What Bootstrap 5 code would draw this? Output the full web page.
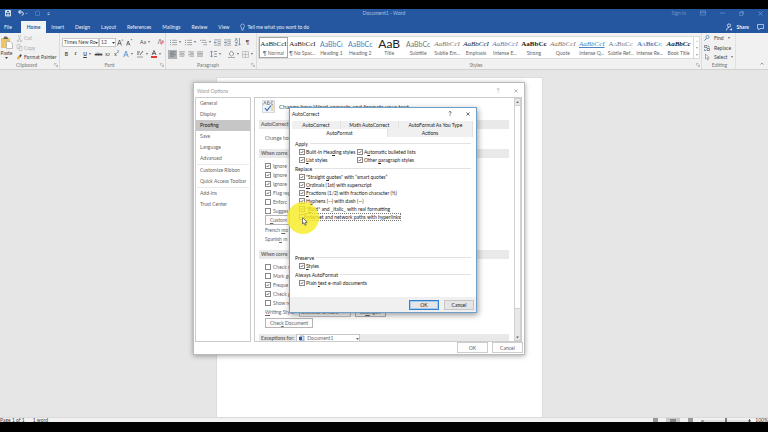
<!DOCTYPE html>
<html lang="en">
<head>
<meta charset="utf-8">
<meta name="viewport" content="width=device-width, initial-scale=1">
<title>Document1 - Word</title>
<link href="https://cdn.jsdelivr.net/npm/bootstrap@5.3.0/dist/css/bootstrap.min.css" rel="stylesheet">
<style>
:root{--word-blue:#2457a0}
body{font-family:Lato,"Open Sans",sans-serif;font-size:5px;line-height:8px;color:#333;background:#000;min-height:100vh;padding:9px 0 10px}
button,input,select{font:inherit;color:inherit}
svg{display:block;flex:none;overflow:visible}
a{color:inherit;text-decoration:none}
.plain{border:0;background:none;padding:0;display:flex;align-items:center;justify-content:center;line-height:8px}
.tight{gap:2px}
/* window frame */
.app-top{background:var(--word-blue);color:#e8eef8}
.titlebar{height:12px;position:relative;color:#a9c0e2}
.quick{gap:7px;padding-left:5px;color:#fff}
.wincontrols{gap:14px;padding-right:5px;color:#6f93c9}
.tabs{height:12px}
.tabs a{padding:0 6px 0 5px;line-height:12px}
.tabs .filetab{padding:0 9px 0 4px}
.tabs a.chosen{background:#f3f3f3;color:var(--word-blue);font-weight:700;padding:0 6px}
/* ribbon */
.ribbon{background:#f1f1f1;height:37px;border-bottom:1px solid #d2d2d2;color:#444}
.group{border-right:1px solid #dcdcdc;padding-top:3px;position:relative}
.caption{color:#777;line-height:8px;text-align:center;padding-right:6px}
.g-clip{width:60px;padding-top:1px}.g-font{width:106px}.g-para{width:91px}.g-edit{width:33px;padding:1px 0 0 2px}
.tools{height:25px}
.tools.tall{height:27px}
.toolrow{height:12px;padding-left:2px}
.launch{position:absolute;right:1px;bottom:2px}
.cell{width:9px;height:9px}
.wide{width:14px;height:9px;gap:2px}
.fade-ic{color:#aaa}
.combo{border:1px solid #c6c6c6;border-radius:0;background:#fff;height:9px;line-height:7px;padding:0 0 0 1px;appearance:none}
.face{width:37px}.size{width:17px}
.writing{width:52px}.target{width:64px;padding-left:10px}
.boxed{position:relative}
.boxed svg{position:absolute;right:1px;top:4px;pointer-events:none}
.boxed .docmark{right:auto;left:3px;top:2px}
.gallery{background:#fff;border:1px solid #dadada;height:23px;margin:0 1px}
.style-tile{flex:1 1 0;min-width:0;border:1px solid transparent;background:none;padding:0;height:21px;text-align:center;color:#666}
.style-tile.chosen{border-color:#a5a5a5}
.sample{display:block;height:12px;line-height:12px;font-size:7px;white-space:nowrap;color:#222}
.caplabel{display:block;line-height:7px;white-space:nowrap}
.serif{font-family:"Liberation Serif",serif}
.blue{color:#5082be}
.grey{color:#777}
.titlesample{font-size:12px}
.smallcaps{font-variant:small-caps}
.scroller{width:6px;border-left:1px solid #dadada;color:#777}
/* document */
.workspace{background:#e6e6e6;position:relative;padding:7px 9px 0 0}
.sheet{width:43%;background:#fff;border:1px solid #dcdcdc;border-width:1px 1px 0}
.statusbar{height:5px;background:#f1f1f1;border-top:1px solid #dadada;overflow:hidden;line-height:6px;color:#444}
/* dialogs */
.window{position:absolute;background:#fff}
.pairgap{gap:14px}
.options{left:193px;top:12px;width:332px;height:273px;border:1px solid #bcbcbc;box-shadow:0 1px 5px rgba(0,0,0,.35);color:#666}
.options .head{height:14px;color:#999;padding:1px 6px 0 3px}
.options .middle{height:245px;padding:0 2px 0 1px;gap:3px}
.panel{border:1px solid #ccc}
.sidenav{width:56px}
.sidenav a{display:block;line-height:11px;padding-left:4px}
.sidenav a.chosen{background:#c6c6c6;color:#222}
.sidenav hr{margin:0 1px;color:#aaa}
.content{overflow:hidden}
.scrollarea{padding:2px 5px 0 4px;overflow:hidden}
.intro{height:13px;gap:3px;padding-left:3px;font-size:6px;color:#444;margin-bottom:7px}
.band{background:#e9e9e9;font-weight:700;line-height:9px;padding-left:2px;color:#666;white-space:nowrap}
.inset{padding:3px 0 0 6px}
.change{padding:5px 0 0 6px}
.blockgap{margin-top:6px}
.modes{line-height:9px}
.push{border:1px solid #b5b5b5;background:#fdfdfd;padding:0 4px;line-height:8px;height:10px;border-radius:0}
.stack{gap:1px}
.opt{height:9px;gap:2px}
.form-check-input.tick{width:6px;height:6px;margin:0;border:1px solid #888;border-radius:0;background-color:#fff;flex:none;box-shadow:none}
.form-check-input.tick:checked{background-color:#fff;border-color:#888;background-size:100% 100%;background-image:url("data:image/svg+xml,%3Csvg xmlns='http://www.w3.org/2000/svg' viewBox='0 0 6 6'%3E%3Cpath d='M1 3l1.4 1.5L5 1.4' fill='none' stroke='%23333'/%3E%3C/svg%3E")}
.vscroll{width:7px;background:#e8e8e8;border:1px solid #d0d0d0}
.thumb{height:204px;background:#fff;border:1px solid #d0d0d0;border-width:1px 0}
.foot{height:12px;gap:4px;padding-right:1px}
.foot button{width:31px;height:11px;text-align:center;padding:0;color:#666;border-color:#ccc}
.autocorrect{left:289px;top:37px;width:188px;height:206px;border:1px solid #6c9fc9;box-shadow:1px 2px 6px rgba(0,0,0,.4);color:#222}
.autocorrect .head{height:13px;padding:0 6px 2px 2px}
.sheetwrap{padding:0 3px 0 2px}
.tabline{background:#f0f0f0}
.tabline button{border-right:1px solid #e2e2e2;color:#222}
.t1{width:27%}.t2{width:32%}.t3{width:41%}
.t4{width:53%}.t5{width:47%}
.tabline .t4{background:#fff}
.inner{padding:2px 2px 0 3px}
.legendline{height:9px;gap:2px}
.legendline::after{content:"";flex:1;height:1px;background:#e2e2e2}
.pairs{padding-left:4px}
.autocorrect .opt{height:8px;gap:1px}
.colone{width:58px}
.focused{outline:1px dotted #777;line-height:6px}
.spare{height:32px}
.bottom{background:#f0f0f0;height:15px;gap:5px;padding-right:2px;margin-top:auto}
.bottom button{width:30px;height:10px;border:1px solid #c6c6c6;background:#e5e5e5;padding:0;line-height:8px}
.bottom .default{border:1px solid #3080cf;box-shadow:inset 0 0 0 1px #a6cbee}
.spot{position:absolute;left:287px;top:132px;width:32px;height:32px;border-radius:50%;background:rgba(247,236,38,.82)}
.pointer{position:absolute;left:302px;top:147px}
</style>
</head>
<body class="d-flex flex-column">
<svg width="0" height="0" class="position-absolute" aria-hidden="true">
<defs>
<symbol id="caret" viewBox="0 0 3 2"><path d="M0 0h3L1.500 2z" fill="currentColor"/></symbol>
<symbol id="corner" viewBox="0 0 5 5"><path d="M.5 3V.5H3M2 2l2 2M4.500 2v2.500H2" fill="none" stroke="#888" stroke-width=".6"/></symbol>
<symbol id="bullets" viewBox="0 0 8 8"><path d="M0 1.500h1M0 4h1M0 6.500h1" stroke="#55779f"/><path d="M2.500 1.500H8M2.500 4H8M2.500 6.500H8" stroke="#777" stroke-width=".7"/></symbol>
<symbol id="levels" viewBox="0 0 8 8"><path d="M0 1.500h1M2 4h1M4 6.500h1" stroke="#55779f"/><path d="M2 1.500h5M4 4h4M5.500 6.500H8" stroke="#777" stroke-width=".7"/></symbol>
<symbol id="outdent" viewBox="0 0 8 8"><path d="M0 1h8M4 3h4M4 5h4M0 7h8" stroke="#777" stroke-width=".7"/><path d="M3 4H0m1.300-1.300L0 4l1.300 1.300" fill="none" stroke="#4878ad" stroke-width=".8"/></symbol>
<symbol id="indent" viewBox="0 0 8 8"><path d="M0 1h8M4 3h4M4 5h4M0 7h8" stroke="#777" stroke-width=".7"/><path d="M0 4h3M1.700 2.700L3 4 1.700 5.300" fill="none" stroke="#4878ad" stroke-width=".8"/></symbol>
<symbol id="al-left" viewBox="0 0 7 7"><path d="M0 1h7M0 2.700h5M0 4.400h7M0 6.100h5" stroke="#666" stroke-width=".7"/></symbol>
<symbol id="al-center" viewBox="0 0 7 7"><path d="M0 1h7M1 2.700h5M0 4.400h7M1 6.100h5" stroke="#777" stroke-width=".7"/></symbol>
<symbol id="al-right" viewBox="0 0 7 7"><path d="M0 1h7M2 2.700h5M0 4.400h7M2 6.100h5" stroke="#777" stroke-width=".7"/></symbol>
<symbol id="al-full" viewBox="0 0 7 7"><path d="M0 1h7M0 2.700h7M0 4.400h7M0 6.100h7" stroke="#777" stroke-width=".7"/></symbol>
<symbol id="question" viewBox="0 0 4 6"><path d="M.7 1.600C.9.300 3.300.300 3.300 1.700 3.300 2.700 2 2.700 2 4M2 5v.8" fill="none" stroke="currentColor" stroke-width=".8"/></symbol>
<symbol id="cross" viewBox="0 0 5 5"><path d="M.5.500l4 4m0-4l-4 4" stroke="currentColor" stroke-width=".8"/></symbol>
</defs>
</svg>

<header class="app-top">
 <div class="titlebar d-flex justify-content-between align-items-start">
  <div class="quick d-flex align-items-center">
   <button class="plain" aria-label="Save"><svg width="6" height="8" viewBox="0 0 6 8"><path d="M.5 1.500h5v5.500h-5zM1.500 1.500v2h3v-2M2 7V5.300h2V7" fill="none" stroke="#fff" stroke-width=".8"/></svg></button>
   <button class="plain" aria-label="Undo"><svg width="10" height="8" viewBox="0 0 10 8"><path d="M2.500 1L.6 3l2 2M.8 3h3c2 0 2 3 0 3.500" fill="none" stroke="#fff"/><path d="M7.500 4h2l-1 1z" fill="#b7cbe8"/></svg></button>
   <button class="plain" aria-label="Repeat"><svg width="5" height="8" viewBox="0 0 5 8"><path d="M4.500 2.500v4h-4v-4h2M3 1l1.500 1.500" fill="none" stroke="#5a83bf" stroke-width=".7"/></svg></button>
   <button class="plain" aria-label="Customize"><svg width="6" height="8" viewBox="0 0 6 8"><path d="M.5 3.500h2M.5 5h2l-1 1z" fill="#b7cbe8" stroke="#b7cbe8" stroke-width=".5"/></svg></button>
  </div>
  <span class="position-absolute start-50 translate-middle-x">Document1 - Word</span>
  <div class="wincontrols d-flex align-items-center">
   <a href="#">Sign in</a>
   <svg width="6" height="6" viewBox="0 0 6 6"><path d="M.5 1h5v4h-5zM.5 2.300h5" fill="none" stroke="currentColor" stroke-width=".7"/></svg>
   <svg width="5" height="6" viewBox="0 0 5 6"><path d="M0 3h5" stroke="currentColor" stroke-width=".7"/></svg>
   <svg width="5" height="5" viewBox="0 0 5 5"><path d="M.5 1.500h3v3h-3zM1.500 1.500v-1h3v3h-1" fill="none" stroke="currentColor" stroke-width=".7"/></svg>
   <svg width="5" height="5"><use href="#cross"/></svg>
  </div>
 </div>
 <nav class="tabs d-flex align-items-end">
  <a href="#" class="filetab">File</a><a href="#" class="chosen">Home</a><a href="#">Insert</a><a href="#">Design</a><a href="#">Layout</a><a href="#">References</a><a href="#">Mailings</a><a href="#">Review</a><a href="#">View</a>
  <a href="#" class="d-flex align-items-center tight"><svg width="5" height="8" viewBox="0 0 5 8"><path d="M1.500 5C.2 3.700.3 1 2.500 1s2.300 2.700 1 4v1.200h-2zM1.700 7.200h1.600" fill="none" stroke="#d5e1f3" stroke-width=".6"/></svg>Tell me what you want to do</a>
  <a href="#" class="ms-auto px-0 d-flex align-items-center gap-1"><svg width="6" height="8" viewBox="0 0 6 8"><circle cx="3" cy="2.500" r="1.600" fill="none" stroke="#fff" stroke-width=".7"/><path d="M.5 7.500C.5 5 2 4.500 3 4.500M5.500 7.500v-2M3.800 6.500h2" fill="none" stroke="#fff" stroke-width=".7"/></svg><b>Share</b></a>
  <a href="#" class="ps-2 pe-1 d-flex align-items-center" aria-label="Comments"><svg width="7" height="12" viewBox="0 0 7 12"><path d="M.5 3.500h6v4H3L1.700 9V7.500H.5z" fill="none" stroke="#dbe6f6" stroke-width=".7"/></svg></a>
 </nav>
</header>

<section class="ribbon d-flex" aria-label="Ribbon">
 <div class="group g-clip">
  <div class="tools tall d-flex">
   <button class="plain flex-column" aria-label="Paste"><svg width="13" height="13" viewBox="0 0 13 13"><path d="M1 2h9v10H1z" fill="#edc468"/><path d="M3.500 2l1-1.500h2L8 2v1H3.500z" fill="#666"/><path d="M6.500 5.500h3.800L12.500 8v4.500h-6z" fill="#fff" stroke="#999" stroke-width=".6"/></svg><span>Paste</span><svg width="3" height="2"><use href="#caret"/></svg></button>
   <div class="ps-1 d-flex flex-column align-items-start justify-content-between">
    <button class="plain fade-ic tight"><svg width="5" height="7" viewBox="0 0 5 7"><path d="M1 0l2.500 5M4 0L1.500 5" stroke="#bbb" stroke-width=".7"/><circle cx="1" cy="6" r=".8" fill="none" stroke="#aaa" stroke-width=".6"/><circle cx="4" cy="6" r=".8" fill="none" stroke="#aaa" stroke-width=".6"/></svg>Cut</button>
    <button class="plain fade-ic tight"><svg width="5" height="7" viewBox="0 0 5 7"><path d="M0 .5h3v4H0zM2 2.500h3v4H2z" fill="#f1f1f1" stroke="#bbb" stroke-width=".7"/></svg>Copy</button>
    <button class="plain tight"><svg width="5" height="8" viewBox="0 0 6 8"><path d="M0 4.500l2.500-2L4 4.500 1 7.500z" fill="#e5ad3c"/><path d="M2.500 2.500L4.700.5l1 1.500L4 4.500z" fill="#444"/></svg>Format Painter</button>
   </div>
  </div>
  <div class="caption">Clipboard</div><svg class="launch" width="4" height="4"><use href="#corner"/></svg>
 </div>

 <div class="group g-font">
  <div class="tools">
   <div class="toolrow d-flex align-items-center">
    <span class="boxed"><select class="combo face" aria-label="Font"><option>Times New Ro</option></select><svg width="3" height="2"><use href="#caret"/></svg></span>
    <span class="boxed"><select class="combo size" aria-label="Font size"><option>12</option></select><svg width="3" height="2"><use href="#caret"/></svg></span>
    <button class="plain cell" aria-label="Grow font"><svg width="7" height="7" viewBox="0 0 7 7"><path d="M.5 6.500L2.500 1l2 5.500M1.200 4.500h2.600" fill="none" stroke="#444" stroke-width=".7"/><path d="M4.500 1.500L5.500.2l1 1.300z" fill="#4878ad"/></svg></button>
    <button class="plain cell" aria-label="Shrink font"><svg width="7" height="7" viewBox="0 0 7 7"><path d="M.5 6.500L2.200 2l1.700 4.500M1.200 5h2" fill="none" stroke="#444" stroke-width=".7"/><path d="M4.500.3h2l-1 1.300z" fill="#4878ad"/></svg></button>
    <button class="plain wide ms-1">Aa<svg width="2" height="2"><use href="#caret"/></svg></button>
    <button class="plain cell ms-1" aria-label="Clear formatting"><svg width="8" height="8" viewBox="0 0 8 8"><path d="M1 6l2-5 2 5" fill="none" stroke="#777" stroke-width=".7"/><path d="M2.500 5L5.500 2l2 1.500L4.500 7z" fill="#e58c9c"/></svg></button>
   </div>
   <div class="toolrow d-flex align-items-center">
    <button class="plain cell fw-bold">B</button><button class="plain cell serif fst-italic fw-bold">I</button><button class="plain wide fw-bold"><u>U</u><svg width="2" height="2"><use href="#caret"/></svg></button><button class="plain cell text-decoration-line-through">abc</button><button class="plain cell" aria-label="Subscript">x<sub>2</sub></button><button class="plain cell" aria-label="Superscript">x<sup>2</sup></button>
    <button class="plain wide" aria-label="Text effects"><svg width="6" height="8" viewBox="0 0 6 8"><path d="M.7 7L3 1l2.300 6M1.500 5h3" fill="none" stroke="#6b9fd8" stroke-width="1"/></svg><svg width="2" height="2"><use href="#caret"/></svg></button>
    <button class="plain wide" aria-label="Highlight"><svg width="7" height="8" viewBox="0 0 7 8"><path d="M0 2h3M0 4h2M3 5l3-4" stroke="#555" stroke-width=".9"/><path d="M0 7h6" stroke="#999"/></svg><svg width="2" height="2"><use href="#caret"/></svg></button>
    <button class="plain wide" aria-label="Font color"><svg width="6" height="8" viewBox="0 0 6 8"><path d="M1 5l2-4.500L5 5M1.700 3.600h2.600" fill="none" stroke="#444" stroke-width=".8"/><path d="M0 7h6" stroke="#e22820" stroke-width="1.800"/></svg><svg width="2" height="2"><use href="#caret"/></svg></button>
   </div>
  </div>
  <div class="caption">Font</div><svg class="launch" width="4" height="4"><use href="#corner"/></svg>
 </div>

 <div class="group g-para">
  <div class="tools">
   <div class="toolrow d-flex align-items-center justify-content-between pe-1">
    <button class="plain wide" aria-label="Bullets"><svg width="7" height="7"><use href="#bullets"/></svg><svg width="2" height="2"><use href="#caret"/></svg></button>
    <button class="plain wide" aria-label="Numbering"><svg width="7" height="7"><use href="#bullets"/></svg><svg width="2" height="2"><use href="#caret"/></svg></button>
    <button class="plain wide" aria-label="Multilevel list"><svg width="7" height="7"><use href="#levels"/></svg><svg width="2" height="2"><use href="#caret"/></svg></button>
    <button class="plain cell" aria-label="Decrease indent"><svg width="7" height="7"><use href="#outdent"/></svg></button>
    <button class="plain cell" aria-label="Increase indent"><svg width="7" height="7"><use href="#indent"/></svg></button>
    <button class="plain cell" aria-label="Sort"><svg width="6" height="8" viewBox="0 0 6 8"><path d="M0 3.500L1.300 0l1.200 3.500M0 4.500h2.500L0 7.500h2.500M4.500 0v7M3.300 5.800L4.500 7.200l1.200-1.400" fill="none" stroke="#667d99" stroke-width=".7"/></svg></button>
    <button class="plain cell">¶</button>
   </div>
   <div class="toolrow d-flex align-items-center">
    <button class="plain cell bg-secondary bg-opacity-50" aria-label="Align left"><svg width="6" height="6"><use href="#al-left"/></svg></button><button class="plain cell" aria-label="Center"><svg width="6" height="6"><use href="#al-center"/></svg></button><button class="plain cell" aria-label="Align right"><svg width="6" height="6"><use href="#al-right"/></svg></button><button class="plain cell" aria-label="Justify"><svg width="6" height="6"><use href="#al-full"/></svg></button>
    <button class="plain wide ms-1" aria-label="Line spacing"><svg width="7" height="8" viewBox="0 0 7 8"><path d="M1.500 1v6M.3 2.300L1.500 1l1.200 1.300M.3 5.700L1.500 7l1.200-1.300" fill="none" stroke="#4878ad" stroke-width=".7"/><path d="M4 1.500h3M4 4h3M4 6.500h3" stroke="#777" stroke-width=".7"/></svg><svg width="2" height="2"><use href="#caret"/></svg></button>
    <button class="plain wide ms-1" aria-label="Shading"><svg width="7" height="8" viewBox="0 0 7 8"><path d="M1 4l2.500-3L6 4 3.500 6z" fill="#fff" stroke="#666" stroke-width=".7"/><path d="M0 7.500h7" stroke="#aaa"/></svg><svg width="2" height="2"><use href="#caret"/></svg></button>
    <button class="plain wide" aria-label="Borders"><svg width="7" height="7" viewBox="0 0 7 7"><path d="M.5.500h6v6h-6zM3.500.500v6M.5 3.500h6" fill="none" stroke="#aaa" stroke-width=".6"/></svg><svg width="2" height="2"><use href="#caret"/></svg></button>
   </div>
  </div>
  <div class="caption">Paragraph</div><svg class="launch" width="4" height="4"><use href="#corner"/></svg>
 </div>

 <div class="group flex-grow-1 overflow-hidden">
  <div class="tools">
   <div class="gallery d-flex">
    <button class="style-tile chosen"><span class="sample serif">AaBbCcI</span><span class="caplabel">¶ Normal</span></button>
    <button class="style-tile"><span class="sample serif">AaBbCcI</span><span class="caplabel">¶ No Spac...</span></button>
    <button class="style-tile"><span class="sample blue">AaBbCı</span><span class="caplabel">Heading 1</span></button>
    <button class="style-tile"><span class="sample blue">AaBbCc</span><span class="caplabel">Heading 2</span></button>
    <button class="style-tile"><span class="sample titlesample">AaB</span><span class="caplabel">Title</span></button>
    <button class="style-tile"><span class="sample grey">AaBbCc</span><span class="caplabel">Subtitle</span></button>
    <button class="style-tile"><span class="sample serif grey fst-italic">AaBbCcI</span><span class="caplabel">Subtle Em...</span></button>
    <button class="style-tile"><span class="sample serif fst-italic">AaBbCcI</span><span class="caplabel">Emphasis</span></button>
    <button class="style-tile"><span class="sample serif blue fst-italic">AaBbCcI</span><span class="caplabel">Intense E...</span></button>
    <button class="style-tile"><span class="sample serif fw-bold">AaBbCc</span><span class="caplabel">Strong</span></button>
    <button class="style-tile"><span class="sample serif grey fst-italic">AaBbCcI</span><span class="caplabel">Quote</span></button>
    <button class="style-tile"><span class="sample serif blue fst-italic text-decoration-underline">AaBbCcI</span><span class="caplabel">Intense Q...</span></button>
    <button class="style-tile"><span class="sample serif grey smallcaps">AaBbCc</span><span class="caplabel">Subtle Ref...</span></button>
    <button class="style-tile"><span class="sample serif blue fw-bold smallcaps">AaBbCc</span><span class="caplabel">Intense Re...</span></button>
    <button class="style-tile"><span class="sample serif fw-bold fst-italic">AaBbCc</span><span class="caplabel">Book Title</span></button>
    <div class="scroller d-flex flex-column justify-content-around align-items-center"><svg width="2" height="2" viewBox="0 0 3 2"><path d="M0 2h3L1.500 0z" fill="#bbb"/></svg><svg width="2" height="2"><use href="#caret"/></svg><svg width="2" height="2"><use href="#caret"/></svg></div>
   </div>
  </div>
  <div class="caption">Styles</div><svg class="launch" width="4" height="4"><use href="#corner"/></svg>
 </div>

 <div class="g-edit">
  <div class="tools tall d-flex flex-column align-items-start justify-content-between">
   <button class="plain gap-1"><svg width="6" height="6" viewBox="0 0 5 6"><circle cx="3" cy="2" r="1.600" fill="none" stroke="#4878ad" stroke-width=".7"/><path d="M2 3.500L0 5.500" stroke="#4878ad"/></svg>Find<svg width="2" height="2"><use href="#caret"/></svg></button>
   <button class="plain gap-1"><svg width="6" height="8" viewBox="0 0 5 8"><path d="M0 1.500h2.500v2H0zM2.500 4.500H5v2H2.500z" fill="none" stroke="#666" stroke-width=".7"/><path d="M3.500 2h1v1.500M0 5v1.500h1.500" fill="none" stroke="#4878ad" stroke-width=".7"/></svg>Replace</button>
   <button class="plain gap-1"><svg width="6" height="8" viewBox="0 0 5 8"><path d="M1 1v5l1.200-1 1 2 .8-.4-1-2h1.500z" fill="#fff" stroke="#777" stroke-width=".6"/></svg>Select<svg width="2" height="2"><use href="#caret"/></svg></button>
  </div>
  <div class="caption pe-0">Editing</div>
 </div>
 <div class="ps-4 pe-1 d-flex align-items-end pb-1 border-start"><svg width="4" height="3" viewBox="0 0 4 3"><path d="M.5 2.500L2 1l1.500 1.500" fill="none" stroke="#777" stroke-width=".7"/></svg></div>
</section>

<main class="workspace flex-grow-1 d-flex">
 <div class="sheet mx-auto"></div>

 <section class="window options" role="dialog" aria-label="Word Options">
  <div class="head d-flex align-items-center pairgap"><span class="me-auto">Word Options</span><svg width="4" height="5"><use href="#question"/></svg><svg width="4" height="4"><use href="#cross"/></svg></div>
  <div class="middle d-flex">
   <nav class="panel sidenav">
    <a href="#">General</a><a href="#">Display</a><a href="#" class="chosen">Proofing</a><a href="#">Save</a><a href="#">Language</a><a href="#">Advanced</a><hr><a href="#">Customize Ribbon</a><a href="#">Quick Access Toolbar</a><hr><a href="#">Add-ins</a><a href="#">Trust Center</a>
   </nav>
   <div class="panel content flex-grow-1 d-flex">
    <div class="scrollarea flex-grow-1">
     <div class="intro d-flex align-items-center"><svg width="14" height="13" viewBox="0 0 14 13"><path d="M.5.500h12v12H.5z" fill="#eef3fa" stroke="#c7ccd3" stroke-width=".7"/><path d="M1.500 4.500L3 1.500l1.300 3M5.500 1.500v3h1.700l.3-.8-.7-.7.3-.8-.4-.7zM11.300 2L10 1.500 9 2.200v1.500l1 .8 1.300-.5" fill="none" stroke="#555" stroke-width=".6"/><path d="M3 8l2 2.500L9 5.500" fill="none" stroke="#3267ae" stroke-width="1.200"/><path d="M9 6h3M9 8h3M9 10h3" stroke="#efc15d" stroke-width="1"/></svg><span>Change how Word corrects and formats your text.</span></div>
     <div class="band">AutoCorrect</div>
     <div class="change modes">Change how</div>
     <div class="band blockgap">When corre</div>
     <div class="inset">
      <label class="opt d-flex align-items-center"><input type="checkbox" class="form-check-input tick" checked>Ignore</label>
      <label class="opt d-flex align-items-center"><input type="checkbox" class="form-check-input tick" checked>Ignore</label>
      <label class="opt d-flex align-items-center"><input type="checkbox" class="form-check-input tick" checked>Ignore</label>
      <label class="opt d-flex align-items-center"><input type="checkbox" class="form-check-input tick" checked>Flag rep</label>
      <label class="opt d-flex align-items-center"><input type="checkbox" class="form-check-input tick">Enforc</label>
      <label class="opt d-flex align-items-center"><input type="checkbox" class="form-check-input tick">Sugges</label>
      <div class="d-flex flex-column align-items-start stack">
       <button class="push pe-5"><u>C</u>ustom</button>
       <div class="modes">French <u>m</u>o</div>
      </div>
      <div class="modes">Spanis<u>h</u> m</div>
     </div>
     <div class="band blockgap">When corre</div>
     <div class="inset">
      <label class="opt d-flex align-items-center"><input type="checkbox" class="form-check-input tick">Check s</label>
      <label class="opt d-flex align-items-center"><input type="checkbox" class="form-check-input tick">Mark gr</label>
      <label class="opt d-flex align-items-center"><input type="checkbox" class="form-check-input tick" checked>Freque</label>
      <label class="opt d-flex align-items-center"><input type="checkbox" class="form-check-input tick" checked>Check g</label>
      <label class="opt d-flex align-items-center"><input type="checkbox" class="form-check-input tick">Show re</label>
      <div class="d-flex flex-column align-items-start stack">
       <div class="d-flex align-items-center gap-1"><label for="ws"><u>W</u>riting Style:</label><select id="ws" class="combo writing"><option>Grammar &amp; more</option></select><button class="push">Se<u>t</u>tings...</button></div>
       <button class="push">Chec<u>k</u> Document</button>
      </div>
     </div>
     <div class="band d-flex align-items-center blockgap tight"><label for="ex">E<u>x</u>ceptions for:</label><span class="boxed fw-normal"><select id="ex" class="combo target"><option>Document1</option></select><svg class="docmark" width="5" height="5" viewBox="0 0 5 5"><path d="M1 0h4v5H1z" fill="#d5e1f3" stroke="#5a83bd" stroke-width=".6"/><path d="M0 1h3v3H0z" fill="#2b579a"/></svg><svg width="3" height="2"><use href="#caret"/></svg></span></div>
    </div>
    <div class="vscroll d-flex flex-column align-items-center"><svg width="3" height="6" viewBox="0 0 3 6"><path d="M0 4h3L1.500 2z" fill="#777"/></svg><div class="thumb w-100"></div><svg class="mt-auto" width="3" height="5"><use href="#caret"/></svg></div>
   </div>
  </div>
  <div class="foot d-flex justify-content-end"><button class="push">OK</button><button class="push">Cancel</button></div>
 </section>

 <section class="window autocorrect d-flex flex-column" role="dialog" aria-label="AutoCorrect">
  <div class="head d-flex align-items-center pairgap"><span class="me-auto">AutoCorrect</span><svg width="4" height="5"><use href="#question"/></svg><svg width="4" height="4"><use href="#cross"/></svg></div>
  <div class="sheetwrap">
   <div class="tabline d-flex"><button class="plain t1">AutoCorrect</button><button class="plain t2">Math AutoCorrect</button><button class="plain t3">AutoFormat As You Type</button></div>
   <div class="tabline d-flex"><button class="plain t4">AutoFormat</button><button class="plain t5">Actions</button></div>
   <div class="inner">
    <div class="legendline d-flex align-items-center">Apply</div>
    <div class="pairs">
     <div class="d-flex"><label class="opt colone d-flex align-items-center"><input type="checkbox" class="form-check-input tick" checked><span>Built-in Hea<u>d</u>ing styles</span></label><label class="opt d-flex align-items-center"><input type="checkbox" class="form-check-input tick" checked><span>A<u>u</u>tomatic bulleted lists</span></label></div>
     <div class="d-flex"><label class="opt colone d-flex align-items-center"><input type="checkbox" class="form-check-input tick" checked><span><u>L</u>ist styles</span></label><label class="opt d-flex align-items-center"><input type="checkbox" class="form-check-input tick" checked><span>Other <u>p</u>aragraph styles</span></label></div>
    </div>
    <div class="legendline d-flex align-items-center">Replace</div>
    <div class="pairs">
     <label class="opt d-flex align-items-center"><input type="checkbox" class="form-check-input tick" checked><span>"Straight <u>q</u>uotes" with “smart quotes”</span></label>
     <label class="opt d-flex align-items-center"><input type="checkbox" class="form-check-input tick" checked><span><u>O</u>rdinals (1st) with superscript</span></label>
     <label class="opt d-flex align-items-center"><input type="checkbox" class="form-check-input tick" checked><span><u>F</u>ractions (1/2) with fraction character (½)</span></label>
     <label class="opt d-flex align-items-center"><input type="checkbox" class="form-check-input tick" checked><span>H<u>y</u>phens (--) with dash (—)</span></label>
     <label class="opt d-flex align-items-center"><input type="checkbox" class="form-check-input tick" checked><span>*<u>B</u>old* and _italic_ with real formatting</span></label>
     <label class="opt d-flex align-items-center"><input type="checkbox" class="form-check-input tick"><span class="focused"><u>I</u>nternet and network paths with hyperlinks</span></label>
    </div>
    <div class="spare"></div>
    <div class="legendline d-flex align-items-center">Preserve</div>
    <label class="opt pairs d-flex align-items-center"><input type="checkbox" class="form-check-input tick" checked><span><u>S</u>tyles</span></label>
    <div class="legendline d-flex align-items-center">Always AutoFormat</div>
    <label class="opt pairs d-flex align-items-center"><input type="checkbox" class="form-check-input tick" checked><span>Plain <u>t</u>ext e-mail documents</span></label>
   </div>
  </div>
  <div class="bottom d-flex justify-content-end align-items-center"><button class="default">OK</button><button>Cancel</button></div>
 </section>
 <div class="spot"></div>
 <svg class="pointer" width="6" height="9" viewBox="0 0 6 9"><path d="M.5.500v6.500l1.500-1.300 1 2.600 1.200-.5-1-2.500h2z" fill="#fff" stroke="#444" stroke-width=".7"/></svg>
</main>
<footer class="statusbar d-flex align-items-center"><span>Page 1 of 1</span><span class="ps-2">1 word</span>
 <div class="ms-auto d-flex align-items-center gap-2"><svg width="5" height="4"><path d="M0 0h5v4H0z" fill="#999"/></svg><svg width="14" height="4"><path d="M0 0h14v4H0z" fill="#c8c8c8"/><path d="M4 1h6v3H4z" fill="#888"/></svg><svg width="5" height="4"><path d="M0 0h5v4H0z" fill="#999"/></svg><div class="d-flex align-items-center gap-1"><svg width="50" height="4"><path d="M0 3h3M47 3h3M48.500 1v3" stroke="#555"/><path d="M3 3h44" stroke="#bbb" stroke-width=".7"/><path d="M25 0v4" stroke="#555" stroke-width="1.500"/></svg><span>100%</span></div></div>
</footer>
<script src="https://cdn.jsdelivr.net/npm/bootstrap@5.3.0/dist/js/bootstrap.bundle.min.js"></script>
</body>
</html>
